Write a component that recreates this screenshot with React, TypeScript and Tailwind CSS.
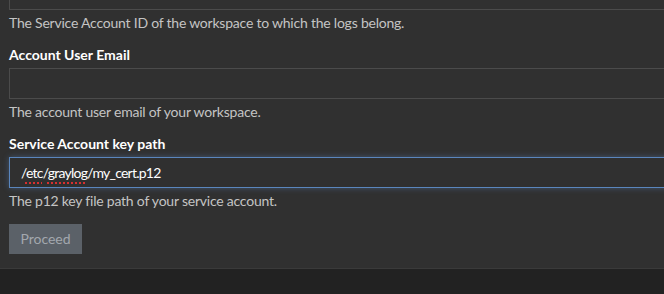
export default function App() {
  return (
    <div
      className="w-[664px] h-[294px] overflow-hidden bg-[#222222] text-[14px]"
      style={{ fontFamily: '"Source Sans Pro", Lato, "Liberation Sans", sans-serif' }}
    >
      <div className="bg-[#303030] px-[9px] pb-[14px] border-b border-[#3a3a3a]">
        {/* cut-off field from above */}
        <div className="-mt-[21px] h-[31px] w-[700px] border border-[#4b4b4b] bg-[#303030]" />
        <p className="mt-[3px] leading-[20px] tracking-[-0.22px] text-[#c4c4c4]">
          The Service Account ID of the workspace to which the logs belong.
        </p>

        <label className="block mt-[12px] leading-[20px] font-bold text-white">Account User Email</label>
        <div className="mt-[3px] h-[31px] w-[700px] border border-[#4b4b4b] bg-[#303030]" />
        <p className="mt-[3px] leading-[20px] tracking-[-0.22px] text-[#c4c4c4]">
          The account user email of your workspace.
        </p>

        <label className="block mt-[12px] leading-[20px] font-bold text-white">Service Account key path</label>
        <div className="mt-[3px] h-[31px] w-[700px] border border-[#5a86bd] bg-[#303030] shadow-[0_0_6px_rgba(90,134,189,0.45)] flex items-center px-[11px] text-[14px] tracking-[-0.75px] text-white">
          <span>
            /
            <span className="underline decoration-dotted decoration-[#d83030] decoration-[1.5px] underline-offset-[4px]">etc</span>/
            <span className="underline decoration-dotted decoration-[#d83030] decoration-[1.5px] underline-offset-[4px]">graylog</span>
            /my_cert.p12
          </span>
        </div>
        <p className="mt-[3px] leading-[20px] tracking-[-0.22px] text-[#c4c4c4]">
          The p12 key file path of your service account.
        </p>

        <button className="mt-[13px] h-[30px] w-[73px] bg-[#5b6168] text-[#a3a8ae] leading-[20px]">
          Proceed
        </button>
      </div>
    </div>
  );
}
